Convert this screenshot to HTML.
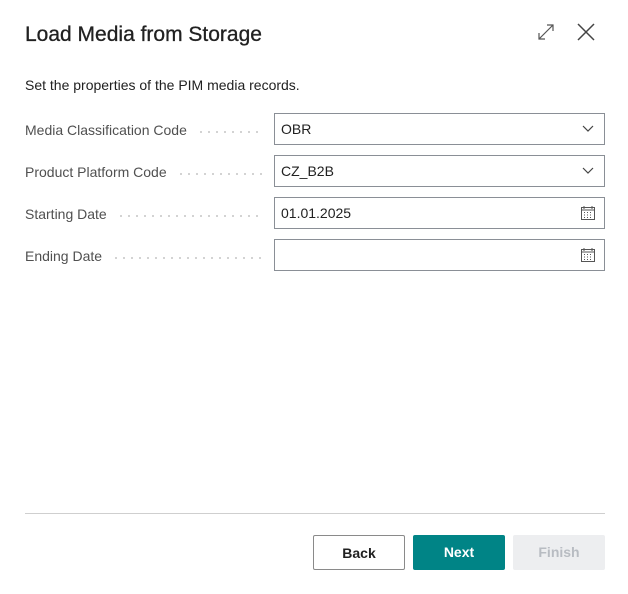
<!DOCTYPE html>
<html><head><style>
body{margin:0;width:628px;height:594px;background:#fff;font-family:"Liberation Sans",sans-serif;position:relative;overflow:hidden;color:#212121}
.a{position:absolute}
.lbl{position:absolute;left:25px;font-size:14px;color:#505050;display:flex;width:245px;align-items:center}
.lbl .d{flex:1;margin:0 6px 0 10px;height:2px;position:relative;top:2px;background:radial-gradient(circle,#c8c8c8 0.9px,transparent 1.1px) 0 0/8px 2px repeat-x}
.f{position:absolute;left:274px;width:329px;height:30px;border:1px solid #8a8f96;font-size:14px;line-height:30px;padding-left:6px;box-sizing:content-box}
.btn{position:absolute;top:535px;width:92px;height:35px;box-sizing:border-box;border-radius:2px;font-size:14px;font-weight:bold;text-align:center;line-height:35px}
</style></head><body>
<div class="a" style="left:25px;top:23px;font-size:21px;color:#212121;-webkit-text-stroke:0.3px #212121">Load Media from Storage</div>
<svg class="a" style="left:537px;top:23px" width="18" height="18" viewBox="0 0 18 18" fill="none" stroke="#555" stroke-width="1.2"><path d="M2 16L16 2M10 2h6v6M2 10v6h6"/></svg>
<svg class="a" style="left:576px;top:22px" width="20" height="20" viewBox="0 0 20 20" stroke="#444" stroke-width="1.5"><path d="M2 2L18 18M18 2L2 18"/></svg>
<div class="a" style="left:25px;top:77px;font-size:14px">Set the properties of the PIM media records.</div>

<div class="lbl" style="top:122px">Media Classification Code<span class="d"></span></div>
<div class="lbl" style="top:164px">Product Platform Code<span class="d"></span></div>
<div class="lbl" style="top:206px">Starting Date<span class="d"></span></div>
<div class="lbl" style="top:248px">Ending Date<span class="d"></span></div>

<div class="f" style="top:113px;width:323px">OBR<svg class="a" style="right:10px;top:11px" width="12" height="8" viewBox="0 0 12 8" fill="none" stroke="#444" stroke-width="1.2"><path d="M1 1l5 5 5-5"/></svg></div>
<div class="f" style="top:155px;width:323px">CZ_B2B<svg class="a" style="right:10px;top:11px" width="12" height="8" viewBox="0 0 12 8" fill="none" stroke="#444" stroke-width="1.2"><path d="M1 1l5 5 5-5"/></svg></div>
<div class="f" style="top:197px;width:323px">01.01.2025<svg class="a" style="right:8px;top:7px" width="16" height="16" viewBox="0 0 16 16" fill="none" stroke="#555" stroke-width="1"><rect x="1.5" y="2.5" width="13" height="12"/><path d="M1.5 5h13M4 1v3M12 1v3M4 7.5h1M7 7.5h1M10 7.5h1M4 10h1M7 10h1M10 10h1M4 12.5h1M7 12.5h1M10 12.5h1"/></svg></div>
<div class="f" style="top:239px;width:323px"><svg class="a" style="right:8px;top:7px" width="16" height="16" viewBox="0 0 16 16" fill="none" stroke="#555" stroke-width="1"><rect x="1.5" y="2.5" width="13" height="12"/><path d="M1.5 5h13M4 1v3M12 1v3M4 7.5h1M7 7.5h1M10 7.5h1M4 10h1M7 10h1M10 10h1M4 12.5h1M7 12.5h1M10 12.5h1"/></svg></div>

<div class="a" style="left:25px;top:513px;width:580px;height:1px;background:#cfcfcf"></div>
<div class="btn" style="left:313px;border:1px solid #8a8a8a;color:#212121">Back</div>
<div class="btn" style="left:413px;background:#008486;color:#fff">Next</div>
<div class="btn" style="left:513px;background:#edeef0;color:#b8bcc2">Finish</div>
</body></html>
